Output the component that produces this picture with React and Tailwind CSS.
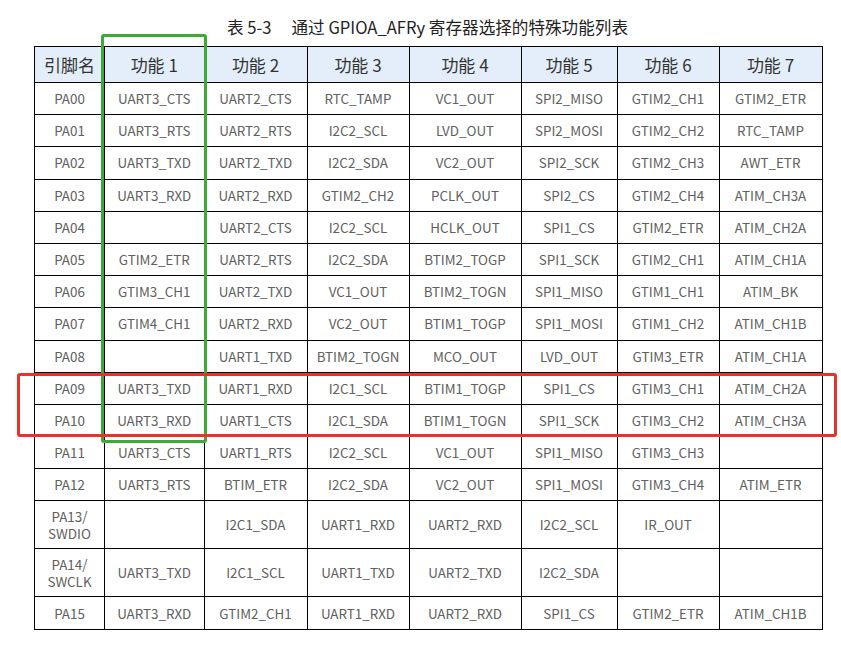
import React from "react";

const head = ["引脚名", "功能 1", "功能 2", "功能 3", "功能 4", "功能 5", "功能 6", "功能 7"];
const widths = ["w-[70px]", "w-[99.5px]", "w-[103px]", "w-[102px]", "w-[112px]", "w-[96px]", "w-[102px]", "w-[103px]"];

const rows = [
  ["PA00", "UART3_CTS", "UART2_CTS", "RTC_TAMP", "VC1_OUT", "SPI2_MISO", "GTIM2_CH1", "GTIM2_ETR"],
  ["PA01", "UART3_RTS", "UART2_RTS", "I2C2_SCL", "LVD_OUT", "SPI2_MOSI", "GTIM2_CH2", "RTC_TAMP"],
  ["PA02", "UART3_TXD", "UART2_TXD", "I2C2_SDA", "VC2_OUT", "SPI2_SCK", "GTIM2_CH3", "AWT_ETR"],
  ["PA03", "UART3_RXD", "UART2_RXD", "GTIM2_CH2", "PCLK_OUT", "SPI2_CS", "GTIM2_CH4", "ATIM_CH3A"],
  ["PA04", "", "UART2_CTS", "I2C2_SCL", "HCLK_OUT", "SPI1_CS", "GTIM2_ETR", "ATIM_CH2A"],
  ["PA05", "GTIM2_ETR", "UART2_RTS", "I2C2_SDA", "BTIM2_TOGP", "SPI1_SCK", "GTIM2_CH1", "ATIM_CH1A"],
  ["PA06", "GTIM3_CH1", "UART2_TXD", "VC1_OUT", "BTIM2_TOGN", "SPI1_MISO", "GTIM1_CH1", "ATIM_BK"],
  ["PA07", "GTIM4_CH1", "UART2_RXD", "VC2_OUT", "BTIM1_TOGP", "SPI1_MOSI", "GTIM1_CH2", "ATIM_CH1B"],
  ["PA08", "", "UART1_TXD", "BTIM2_TOGN", "MCO_OUT", "LVD_OUT", "GTIM3_ETR", "ATIM_CH1A"],
  ["PA09", "UART3_TXD", "UART1_RXD", "I2C1_SCL", "BTIM1_TOGP", "SPI1_CS", "GTIM3_CH1", "ATIM_CH2A"],
  ["PA10", "UART3_RXD", "UART1_CTS", "I2C1_SDA", "BTIM1_TOGN", "SPI1_SCK", "GTIM3_CH2", "ATIM_CH3A"],
  ["PA11", "UART3_CTS", "UART1_RTS", "I2C2_SCL", "VC1_OUT", "SPI1_MISO", "GTIM3_CH3", ""],
  ["PA12", "UART3_RTS", "BTIM_ETR", "I2C2_SDA", "VC2_OUT", "SPI1_MOSI", "GTIM3_CH4", "ATIM_ETR"],
  ["PA13/\nSWDIO", "", "I2C1_SDA", "UART1_RXD", "UART2_RXD", "I2C2_SCL", "IR_OUT", ""],
  ["PA14/\nSWCLK", "UART3_TXD", "I2C1_SCL", "UART1_TXD", "UART2_TXD", "I2C2_SDA", "", ""],
  ["PA15", "UART3_RXD", "GTIM2_CH1", "UART1_RXD", "UART2_RXD", "SPI1_CS", "GTIM2_ETR", "ATIM_CH1B"],
];

const App = () => {
  return (
    <div
      className="relative w-[841px] h-[648px] bg-white overflow-hidden"
      style={{ fontFamily: '"Noto Sans CJK SC", "Noto Sans", sans-serif' }}
    >
      <div className="pt-[16px] pl-[34px]">
        {/* Title */}
        <div className="w-[787px] text-center text-[16.6px] leading-[22px] text-[#222]">
          表 5-3<span className="ml-[20px]">通过 GPIOA_AFRy 寄存器选择的特殊功能列表</span>
        </div>

        {/* Table */}
        <table className="mt-[8px] border-collapse table-fixed w-[787px]">
          <thead>
            <tr className="h-[36px] bg-[#e3eefa]">
              {head.map((h, i) => (
                <th
                  key={h}
                  className={`${widths[i]} border border-black p-0 text-[17px] font-normal text-[#333] text-center`}
                >
                  {h}
                </th>
              ))}
            </tr>
          </thead>
          <tbody>
            {rows.map((r) => {
              const tall = r[0].includes("\n");
              return (
                <tr key={r[0]} className={tall ? "h-[48px]" : "h-[32.2px]"}>
                  {r.map((c, i) => (
                    <td
                      key={i}
                      className="border border-black p-0 text-center text-[13.4px] leading-[17px] text-[#606060] whitespace-pre-line"
                    >
                      {c}
                    </td>
                  ))}
                </tr>
              );
            })}
          </tbody>
        </table>
      </div>

      {/* highlight boxes drawn over the table */}
      <div className="absolute left-[101px] top-[34px] w-[106px] h-[409px] border-[3px] border-[#3aac34] rounded-[3px] pointer-events-none" />
      <div className="absolute left-[16.5px] top-[372.5px] w-[820px] h-[64px] border-[3px] border-[#e5352b] rounded-[3px] pointer-events-none" />
    </div>
  );
};

export default App;
